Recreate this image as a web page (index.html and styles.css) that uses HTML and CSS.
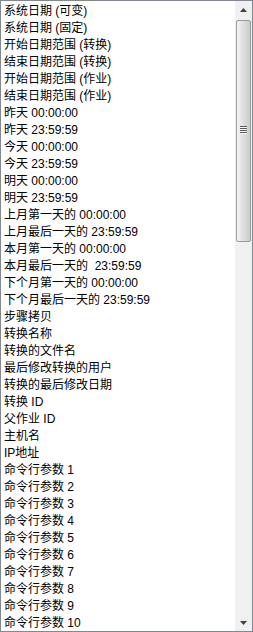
FILE: index.html
```html
<!DOCTYPE html>
<html>
<head>
<meta charset="utf-8">
<link rel="stylesheet" href="styles.css">
</head>
<body>
<div class="box">
  <ul class="list">
    <li>系统日期 (可变)</li>
    <li>系统日期 (固定)</li>
    <li>开始日期范围 (转换)</li>
    <li>结束日期范围 (转换)</li>
    <li>开始日期范围 (作业)</li>
    <li>结束日期范围 (作业)</li>
    <li>昨天 00:00:00</li>
    <li>昨天 23:59:59</li>
    <li>今天 00:00:00</li>
    <li>今天 23:59:59</li>
    <li>明天 00:00:00</li>
    <li>明天 23:59:59</li>
    <li>上月第一天的 00:00:00</li>
    <li>上月最后一天的 23:59:59</li>
    <li>本月第一天的 00:00:00</li>
    <li>本月最后一天的&nbsp;&nbsp;23:59:59</li>
    <li>下个月第一天的 00:00:00</li>
    <li>下个月最后一天的 23:59:59</li>
    <li>步骤拷贝</li>
    <li>转换名称</li>
    <li>转换的文件名</li>
    <li>最后修改转换的用户</li>
    <li>转换的最后修改日期</li>
    <li>转换 ID</li>
    <li>父作业 ID</li>
    <li>主机名</li>
    <li>IP地址</li>
    <li>命令行参数 1</li>
    <li>命令行参数 2</li>
    <li>命令行参数 3</li>
    <li>命令行参数 4</li>
    <li>命令行参数 5</li>
    <li>命令行参数 6</li>
    <li>命令行参数 7</li>
    <li>命令行参数 8</li>
    <li>命令行参数 9</li>
    <li>命令行参数 10</li>
  </ul>
  <div class="scrollbar">
    <div class="btn"><svg width="7" height="4" viewBox="0 0 7 4"><path d="M3.5 0 L7 4 L0 4 Z" fill="#404040"/></svg></div>
    <div class="thumb"><div class="grip"><span></span><span></span><span></span><span></span></div></div>
    <div class="track"></div>
    <div class="btn"><svg width="7" height="4" viewBox="0 0 7 4"><path d="M0 0 L7 0 L3.5 4 Z" fill="#404040"/></svg></div>
  </div>
</div>
</body>
</html>
```
FILE: styles.css
```css
html, body {
  margin: 0;
  padding: 0;
  background: #ffffff;
}
.box {
  width: 253px;
  height: 632px;
  box-sizing: border-box;
  border: 1px solid #828790;
  display: flex;
  overflow: hidden;
  background: #fff;
}
.list {
  flex: 1;
  list-style: none;
  margin: 0;
  padding: 2px 0 0 3px;
  overflow: hidden;
  font-family: "Liberation Sans", "Noto Sans CJK SC", sans-serif;
  font-size: 12px;
  color: #000;
}
.list li {
  height: 17px;
  line-height: 17px;
  white-space: nowrap;
}
.scrollbar {
  width: 17px;
  display: flex;
  flex-direction: column;
  background: #f0f0f0;
}
.btn {
  height: 17px;
  display: flex;
  align-items: center;
  justify-content: center;
  flex: none;
}
.thumb {
  height: 222px;
  margin: 2px 1px 0 1px;
  box-sizing: border-box;
  border: 1px solid #9b9b9b;
  border-radius: 2px;
  background: linear-gradient(to right, #f4f4f4 0%, #e6e6e6 30%, #dadada 60%, #c9c9c9 100%);
  display: flex;
  align-items: center;
  justify-content: center;
  flex: none;
}
.grip {
  display: flex;
  flex-direction: column;
  gap: 1px;
  width: 7px;
  margin-top: -3px;
}
.grip span {
  height: 1px;
  background: #5a5a5a;
  box-shadow: 0 1px 0 #f8f8f8;
}
.track {
  flex: 1;
}
```
